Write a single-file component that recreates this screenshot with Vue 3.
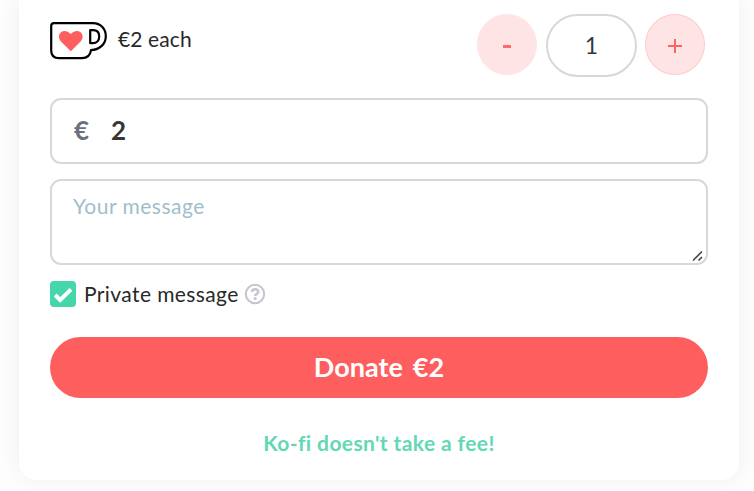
<script setup>
import { ref } from 'vue'

const quantity = ref(1)
const amount = ref(2)
const message = ref('')
const isPrivate = ref(true)

function change(step) {
  quantity.value = Math.max(1, quantity.value + step)
  amount.value = quantity.value * 2
}
</script>

<template>
  <main class="page">
    <section class="card">
      <div class="top">
        <svg class="cup" width="58" height="38" viewBox="0 0 58 38">
          <path
            d="M4 1.2H43C51 1.2 55.8 7.2 55.8 14.2C55.8 22 50 27.5 41 28.2C40.3 33.2 37.5 36.2 32 36.2H9C4 36.2 1.2 33.6 1.2 28.5V4C1.2 2.2 2.2 1.2 4 1.2Z"
            fill="#fff" stroke="#000" stroke-width="2.2" stroke-linejoin="round"
          />
          <path
            d="M40.2 8.2H43C47 8.2 49.2 10.8 49.2 14.4C49.2 18.4 46.8 21.2 42.8 21.2H40.2Z"
            fill="#fff" stroke="#000" stroke-width="2.2" stroke-linejoin="round"
          />
          <path
            d="M20.8 29.2L11 19.4C8.2 16.4 8.5 12.3 11 10.2C13.9 8 17.8 8.9 20.8 12.1C23.8 8.9 27.7 8 30.6 10.2C33.1 12.3 33.4 16.4 30.6 19.4Z"
            fill="#ff5e5e"
          />
        </svg>
        <span class="each">€2 each</span>
        <div class="stepper">
          <button class="round" @click="change(-1)"><span class="minus"></span></button>
          <div class="count">{{ quantity }}</div>
          <button class="round plus-button" @click="change(1)"><span class="plus"></span></button>
        </div>
      </div>

      <div class="amount">
        <span class="currency">€</span>
        <span class="value">{{ amount }}</span>
      </div>

      <div class="message">
        <textarea v-model="message" placeholder="Your message"></textarea>
        <svg class="grip" width="12" height="12" viewBox="0 0 12 12">
          <path d="M1 10.5L10 1.5M6.5 10.5L10 7" fill="none" stroke="#4a4a4a" stroke-width="1.7" />
        </svg>
      </div>

      <div class="private" @click="isPrivate = !isPrivate">
        <span class="box">
          <svg v-if="isPrivate" width="26" height="26" viewBox="0 0 26 26">
            <path d="M5.2 14L10.2 19L21 8.3" fill="none" stroke="#fff" stroke-width="4" />
          </svg>
        </span>
        <span class="private-label">Private message</span>
        <svg class="help" width="22" height="22" viewBox="0 0 22 22" fill="none">
          <circle cx="11" cy="11" r="9.2" stroke="#c5c7cf" stroke-width="2.1" />
          <path d="M7.6 8.7C8.4 7 9.5 6.3 11.1 6.3C12.9 6.3 14.3 7.3 14.3 8.9C14.3 10.9 11.2 10.8 11.2 13" stroke="#c5c7cf" stroke-width="2.6" />
          <circle cx="11.1" cy="15.6" r="1.6" fill="#c5c7cf" />
        </svg>
      </div>

      <button class="donate"><span>Donate</span><span>€{{ amount }}</span></button>
      <p class="fee">Ko-fi doesn't take a fee!</p>
    </section>
  </main>
</template>

<style>
body {
  margin: 0;
  background: #fdfdfd;
}
</style>

<style scoped>
.page {
  box-sizing: border-box;
  width: 754px;
  height: 491px;
  padding: 0 15px 11px 19px;
  overflow: hidden;
  font-family: Lato, "Open Sans", sans-serif;
  color: #282828;
}
.card {
  box-sizing: border-box;
  height: 480px;
  padding: 14px 31px 0;
  background: #fff;
  border-radius: 0 0 18px 18px;
  box-shadow: 0 -2px 22px rgba(0, 0, 0, 0.06);
}
.top {
  display: flex;
  align-items: flex-start;
  height: 84px;
}
.cup {
  margin-top: 8px;
}
.each {
  margin: 11px 0 0 10px;
  font-size: 21px;
  line-height: 28px;
  letter-spacing: 0.1px;
}
.stepper {
  display: flex;
  margin: 0 3px 0 auto;
}
.round {
  display: grid;
  place-items: center;
  box-sizing: border-box;
  width: 60px;
  height: 61px;
  padding: 0;
  border: 1px solid #ffe4e5;
  border-radius: 50%;
  background: #ffe4e5;
}
.plus-button {
  border-color: #ffcacb;
}
.minus {
  width: 8px;
  height: 3px;
  margin-top: 3px;
  background: #ff6a6a;
}
.plus {
  width: 14px;
  height: 14px;
  margin-top: 2px;
  background:
    linear-gradient(#ff6464, #ff6464) center / 14px 2px no-repeat,
    linear-gradient(#ff6464, #ff6464) center / 2px 14px no-repeat;
}
.count {
  box-sizing: border-box;
  width: 91px;
  height: 63px;
  margin: 0 8px 0 9px;
  border: 2px solid #d8d8d8;
  border-radius: 32px;
  font-size: 23px;
  line-height: 59px;
  text-align: center;
  color: #323842;
}
.amount {
  display: flex;
  align-items: center;
  box-sizing: border-box;
  height: 66px;
  padding: 0 0 2px 22px;
  border: 2px solid #d8d8d8;
  border-radius: 11px;
  font-size: 26px;
  font-weight: 700;
}
.currency {
  width: 37px;
  color: #6c6f7d;
}
.value {
  color: #363636;
}
.message {
  position: relative;
  height: 86px;
  margin-top: 15px;
}
textarea {
  display: block;
  box-sizing: border-box;
  width: 100%;
  height: 86px;
  padding: 11px 21px;
  border: 2px solid #d8d8d8;
  border-radius: 11px;
  outline: none;
  resize: none;
  font-family: inherit;
  font-size: 21px;
  line-height: 28px;
  letter-spacing: 0.5px;
  background: #fff;
}
textarea::placeholder {
  color: #9fbecb;
  opacity: 1;
}
.grip {
  position: absolute;
  right: 4px;
  bottom: 3px;
}
.private {
  display: flex;
  align-items: center;
  height: 26px;
  margin-top: 16px;
}
.box {
  width: 26px;
  height: 26px;
  border-radius: 4px;
  background: #46d6ac;
}
.box svg,
.help {
  display: block;
}
.private-label {
  width: 160px;
  margin-left: 8px;
  font-size: 21px;
  line-height: 28px;
  letter-spacing: 0.4px;
  white-space: nowrap;
}
.donate {
  display: flex;
  justify-content: center;
  align-items: center;
  gap: 10px;
  width: 100%;
  height: 61px;
  margin-top: 30px;
  padding: 0 0 2px;
  border: 0;
  border-radius: 31px;
  background: #ff5e5e;
  color: #fff;
  font-family: inherit;
  font-size: 27px;
  font-weight: 700;
}
.fee {
  margin: 31px 0 0;
  font-size: 21px;
  line-height: 28px;
  font-weight: 700;
  letter-spacing: 0.4px;
  font-variant-ligatures: common-ligatures;
  text-align: center;
  color: #62d8b3;
}
</style>
